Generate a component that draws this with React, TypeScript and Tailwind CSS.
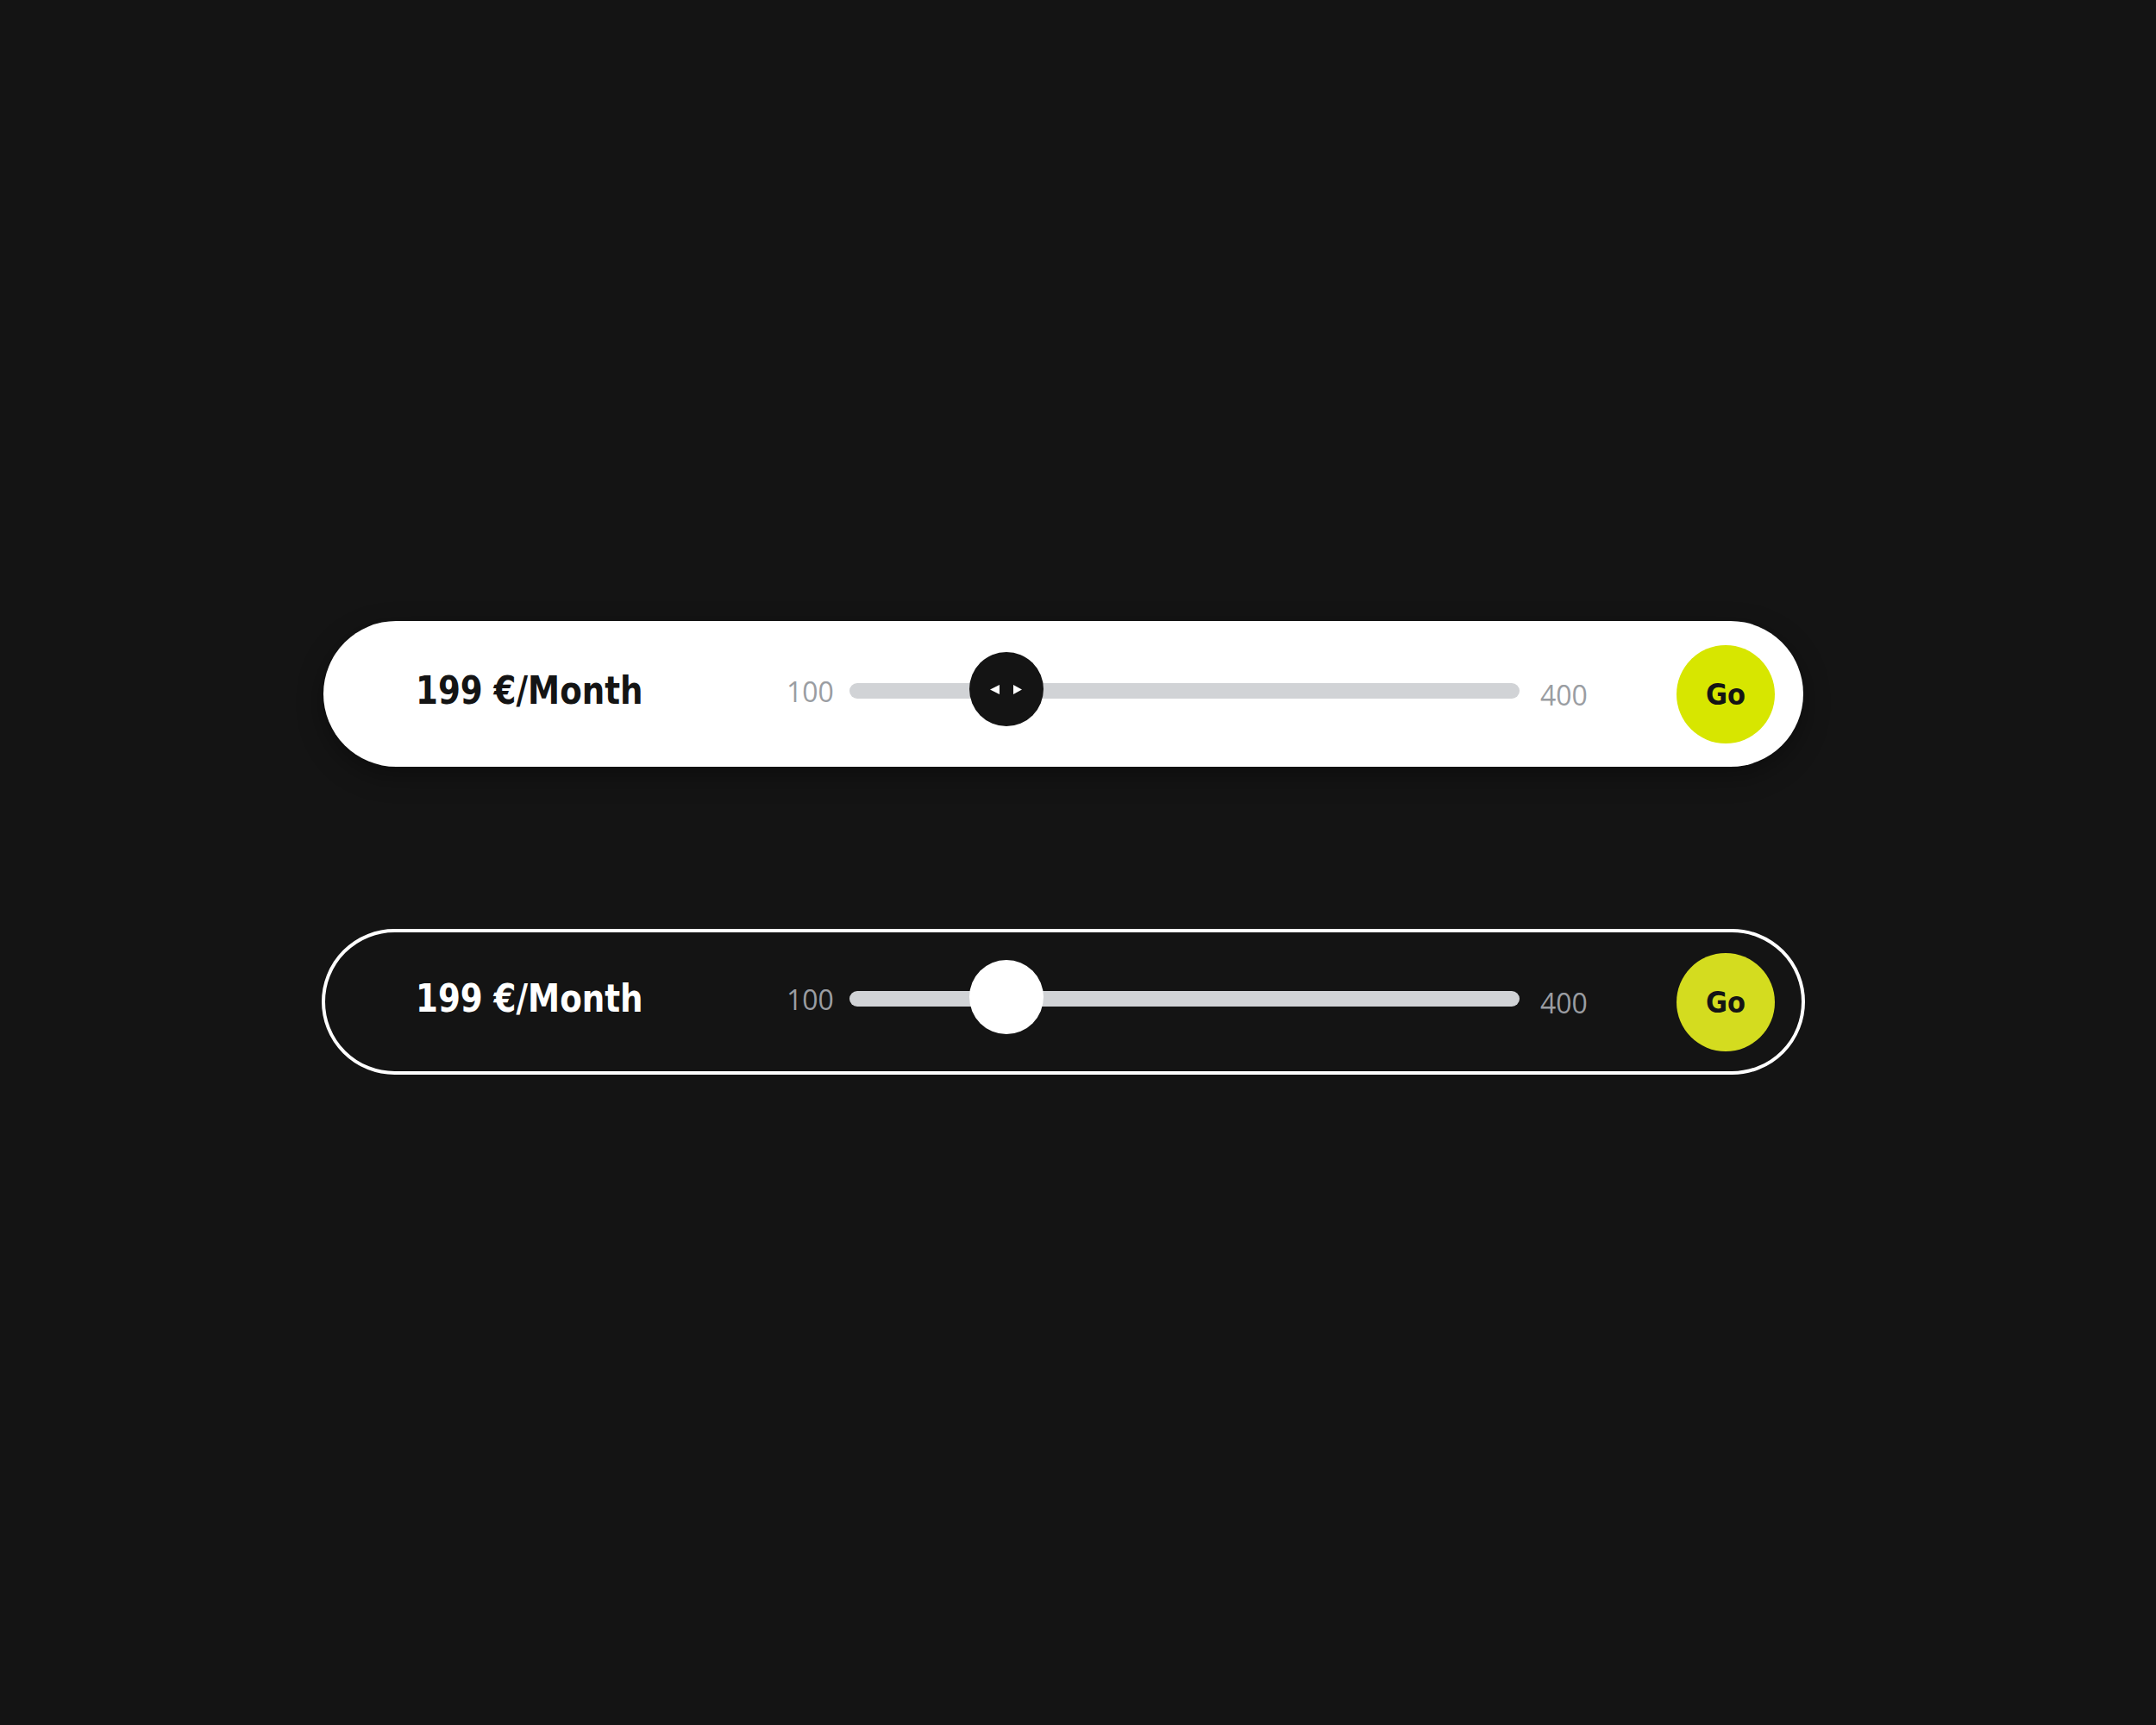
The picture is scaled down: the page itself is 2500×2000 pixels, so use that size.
import React from "react";

type Variant = "light" | "dark";

function Arrows() {
  return (
    <svg width="37" height="11" viewBox="0 0 37 11" className="block">
      <polygon points="0,5.5 11,0 11,11" fill="#ffffff" />
      <polygon points="27,0 37,5.5 27,11" fill="#ffffff" />
    </svg>
  );
}

function PriceBar({ variant }: { variant: Variant }) {
  const light = variant === "light";
  return (
    <div
      className={
        light
          ? "flex h-[169px] w-[1716px] items-center rounded-full bg-white pl-[107px] pr-[33px] shadow-[0_10px_30px_rgba(0,0,0,0.35)]"
          : "flex h-[169px] w-[1720px] items-center rounded-full border-[4px] border-white bg-[#141414] pl-[105px] pr-[31px]"
      }
    >
      <div className="mb-[7px] w-[430px]">
        <span
          className={
            light
              ? "inline-block origin-left font-['DejaVu_Sans'] text-[44px] font-bold leading-none text-[#141414] [font-stretch:condensed] [transform:scaleX(0.94)]"
              : "inline-block origin-left font-['DejaVu_Sans'] text-[44px] font-bold leading-none text-white [font-stretch:condensed] [transform:scaleX(0.94)]"
          }
        >
          199 €/Month
        </span>
      </div>

      <div className="mb-[6px] font-['Open_Sans'] text-[32px] font-normal leading-none text-[#9a9da2]">
        100
      </div>

      <div className="relative mb-[7px] ml-[18px] h-[18px] w-[777px] rounded-full bg-[#d1d3d6]">
        <div
          className={
            light
              ? "absolute left-[139px] top-[-36px] flex h-[86px] w-[86px] items-center justify-center rounded-full bg-[#141414]"
              : "absolute left-[139px] top-[-36px] h-[86px] w-[86px] rounded-full bg-white"
          }
        >
          {light && <Arrows />}
        </div>
      </div>

      <div className="ml-[24px] mt-[2px] font-['Open_Sans'] text-[32px] font-normal leading-none text-[#9a9da2]">
        400
      </div>

      <button
        className={
          light
            ? "ml-auto flex h-[114px] w-[114px] items-center justify-center rounded-full bg-[#d7e600] font-['DejaVu_Sans'] text-[34px] font-bold leading-none text-[#141414] [font-stretch:condensed]"
            : "ml-auto flex h-[114px] w-[114px] items-center justify-center rounded-full bg-[#d4dc1f] font-['DejaVu_Sans'] text-[34px] font-bold leading-none text-[#141414] [font-stretch:condensed]"
        }
      >
        Go
      </button>
    </div>
  );
}

export default function App() {
  return (
    <div className="flex h-[2000px] w-[2500px] flex-col items-center gap-[188px] bg-[#141414] pr-[34px] pt-[720px]">
      <PriceBar variant="light" />
      <PriceBar variant="dark" />
    </div>
  );
}
